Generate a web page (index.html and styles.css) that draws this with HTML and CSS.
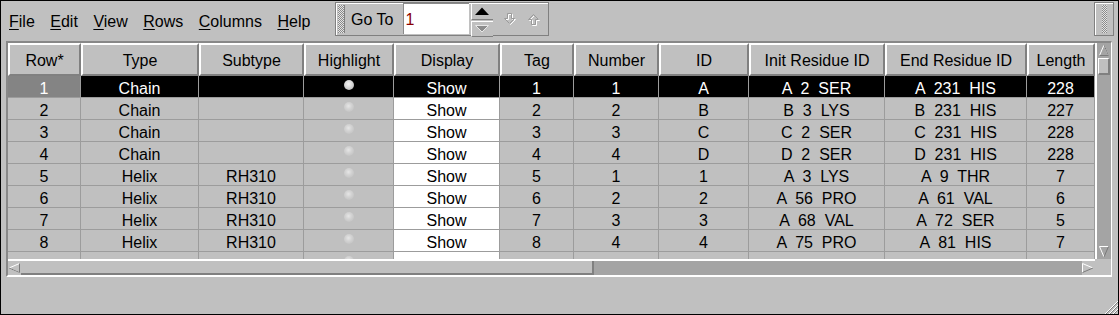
FILE: index.html
```html
<!DOCTYPE html>
<html>
	<head>
		<meta charset=utf-8>
		<title>Secondary structure table</title>
		<link rel="stylesheet" href="styles.css">
	</head>
	<body>
		<div class="window">

			<div class="topbar">
				<nav class="menubar">
					<span class="menu"><u>F</u>ile</span>
					<span class="menu"><u>E</u>dit</span>
					<span class="menu"><u>V</u>iew</span>
					<span class="menu"><u>R</u>ows</span>
					<span class="menu"><u>C</u>olumns</span>
					<span class="menu"><u>H</u>elp</span>
				</nav>
				<div class="toolbar">
					<span class="grip"></span>
					<span class="goto-label">Go To</span>
					<span class="goto-field">1</span>
					<div class="spin">
						<span class="spin-btn">
							<svg width="22" height="15" viewBox="0 0 22 15"><path d="M4 11 L18 11 L11 3.5 Z" fill="#000"/></svg>
						</span>
						<span class="spin-btn">
							<svg width="22" height="14" viewBox="0 0 22 14"><path d="M4.5 3.5 L17.5 3.5 L11 10 Z" fill="#8c8c8c" stroke="#e8e8e8" stroke-width="1"/></svg>
						</span>
					</div>
					<span class="nav-icon">
						<svg width="14" height="13" viewBox="0 0 14 13"><path d="M5.5 1.5 H9.5 V6.5 H12.5 L7.5 11.5 L2.5 6.5 H5.5 Z" fill="none" stroke="#fff"/><path d="M4.5 0.5 H8.5 V5.5 H11.5 L6.5 10.5 L1.5 5.5 H4.5 Z" fill="none" stroke="#9a9a9a"/></svg>
					</span>
					<span class="nav-icon up">
						<svg width="14" height="13" viewBox="0 0 14 13"><path d="M5.5 12.5 H9.5 V7.5 H12.5 L7.5 2.5 L2.5 7.5 H5.5 Z" fill="none" stroke="#fff"/><path d="M4.5 11.5 H8.5 V6.5 H11.5 L6.5 1.5 L1.5 6.5 H4.5 Z" fill="none" stroke="#9a9a9a"/></svg>
					</span>
				</div>
				<div class="topbar-fill"></div>
				<div class="grip-box"><span class="grip"></span></div>
			</div>

			<div class="frame">
				<div class="viewport">
					<div class="row head">
						<div class="cell">Row*</div>
						<div class="cell">Type</div>
						<div class="cell">Subtype</div>
						<div class="cell">Highlight</div>
						<div class="cell">Display</div>
						<div class="cell">Tag</div>
						<div class="cell">Number</div>
						<div class="cell">ID</div>
						<div class="cell">Init Residue ID</div>
						<div class="cell">End Residue ID</div>
						<div class="cell">Length</div>
					</div>
					<div class="row sel">
						<div class="cell num">1</div>
						<div class="cell">Chain</div>
						<div class="cell"></div>
						<div class="cell"><span class="dot"></span></div>
						<div class="cell show">Show</div>
						<div class="cell">1</div>
						<div class="cell">1</div>
						<div class="cell">A</div>
						<div class="cell">A  2  SER</div>
						<div class="cell">A  231  HIS</div>
						<div class="cell">228</div>
					</div>
					<div class="row">
						<div class="cell num">2</div>
						<div class="cell">Chain</div>
						<div class="cell"></div>
						<div class="cell"><span class="dot"></span></div>
						<div class="cell show">Show</div>
						<div class="cell">2</div>
						<div class="cell">2</div>
						<div class="cell">B</div>
						<div class="cell">B  3  LYS</div>
						<div class="cell">B  231  HIS</div>
						<div class="cell">227</div>
					</div>
					<div class="row">
						<div class="cell num">3</div>
						<div class="cell">Chain</div>
						<div class="cell"></div>
						<div class="cell"><span class="dot"></span></div>
						<div class="cell show">Show</div>
						<div class="cell">3</div>
						<div class="cell">3</div>
						<div class="cell">C</div>
						<div class="cell">C  2  SER</div>
						<div class="cell">C  231  HIS</div>
						<div class="cell">228</div>
					</div>
					<div class="row">
						<div class="cell num">4</div>
						<div class="cell">Chain</div>
						<div class="cell"></div>
						<div class="cell"><span class="dot"></span></div>
						<div class="cell show">Show</div>
						<div class="cell">4</div>
						<div class="cell">4</div>
						<div class="cell">D</div>
						<div class="cell">D  2  SER</div>
						<div class="cell">D  231  HIS</div>
						<div class="cell">228</div>
					</div>
					<div class="row">
						<div class="cell num">5</div>
						<div class="cell">Helix</div>
						<div class="cell">RH310</div>
						<div class="cell"><span class="dot"></span></div>
						<div class="cell show">Show</div>
						<div class="cell">5</div>
						<div class="cell">1</div>
						<div class="cell">1</div>
						<div class="cell">A  3  LYS</div>
						<div class="cell">A  9  THR</div>
						<div class="cell">7</div>
					</div>
					<div class="row">
						<div class="cell num">6</div>
						<div class="cell">Helix</div>
						<div class="cell">RH310</div>
						<div class="cell"><span class="dot"></span></div>
						<div class="cell show">Show</div>
						<div class="cell">6</div>
						<div class="cell">2</div>
						<div class="cell">2</div>
						<div class="cell">A  56  PRO</div>
						<div class="cell">A  61  VAL</div>
						<div class="cell">6</div>
					</div>
					<div class="row">
						<div class="cell num">7</div>
						<div class="cell">Helix</div>
						<div class="cell">RH310</div>
						<div class="cell"><span class="dot"></span></div>
						<div class="cell show">Show</div>
						<div class="cell">7</div>
						<div class="cell">3</div>
						<div class="cell">3</div>
						<div class="cell">A  68  VAL</div>
						<div class="cell">A  72  SER</div>
						<div class="cell">5</div>
					</div>
					<div class="row">
						<div class="cell num">8</div>
						<div class="cell">Helix</div>
						<div class="cell">RH310</div>
						<div class="cell"><span class="dot"></span></div>
						<div class="cell show">Show</div>
						<div class="cell">8</div>
						<div class="cell">4</div>
						<div class="cell">4</div>
						<div class="cell">A  75  PRO</div>
						<div class="cell">A  81  HIS</div>
						<div class="cell">7</div>
					</div>
					<!-- next row is cut off by the scrollbar -->
					<div class="row">
						<div class="cell num"></div>
						<div class="cell"></div>
						<div class="cell"></div>
						<div class="cell"><span class="dot"></span></div>
						<div class="cell show"></div>
						<div class="cell"></div>
						<div class="cell"></div>
						<div class="cell"></div>
						<div class="cell"></div>
						<div class="cell"></div>
						<div class="cell"></div>
					</div>
				</div>

				<div class="vscroll">
					<span class="arrow">
						<svg width="12" height="12" viewBox="0 0 12 12"><path d="M1.5 11.5 L6 1 L10.5 11.5" fill="none" stroke="#fff"/><path d="M1.5 11.5 H10.5 L6 1" fill="none" stroke="#7a7a7a"/></svg>
					</span>
					<span class="vthumb"></span>
					<span class="trough"></span>
					<span class="arrow">
						<svg width="12" height="12" viewBox="0 0 12 12"><path d="M10.5 0.5 H1.5 L6 11" fill="none" stroke="#fff"/><path d="M10.5 0.5 L6 11" fill="none" stroke="#7a7a7a"/></svg>
					</span>
				</div>

				<div class="hscroll">
					<span class="arrow">
						<svg width="12" height="12" viewBox="0 0 12 12"><path d="M11.5 1.5 L1 6 L11.5 10.5" fill="none" stroke="#fff"/><path d="M11.5 1.5 V10.5 L1 6" fill="none" stroke="#7a7a7a"/></svg>
					</span>
					<span class="hthumb"></span>
					<span class="trough"></span>
					<span class="arrow">
						<svg width="12" height="12" viewBox="0 0 12 12"><path d="M0.5 10.5 V1.5 L11 6" fill="none" stroke="#fff"/><path d="M0.5 10.5 L11 6" fill="none" stroke="#7a7a7a"/></svg>
					</span>
				</div>
				<div class="corner"></div>
			</div>

			<div class="bottom">
				<svg class="resize" width="14" height="14" viewBox="0 0 14 14">
					<path d="M14 1 L1 14 M14 5 L5 14 M14 9 L9 14" stroke="#fff" stroke-width="1"/>
					<path d="M14 2 L2 14 M14 6 L6 14 M14 10 L10 14" stroke="#808080" stroke-width="1"/>
				</svg>
			</div>
		</div>
	</body>
</html>
```

FILE: styles.css
```css
body { margin: 0; overflow: hidden; background-color: #c0c0c0; font: 16px "Liberation Sans", Arial, sans-serif; color: #000; }

.window {
	width: 1119px;
	height: 315px;
	box-sizing: border-box;
	border: 1px solid #000;
	background-color: #c0c0c0;
	display: flex;
	flex-direction: column;
}

/* menu + tool bar */
.topbar {
	height: 39px;
	display: flex;
	align-items: flex-start;
}
.menubar {
	width: 334px;
	box-sizing: border-box;
	padding: 12px 0 0 8px;
	display: flex;
	gap: 15.5px;
	line-height: 18px;
}
.menu u {
	text-underline-offset: 2px;
}
.toolbar {
	margin-top: 1px;
	width: 214px;
	height: 34px;
	box-sizing: border-box;
	border: 1px solid #808080;
	box-shadow: inset 1px 1px 0 #fff;
	display: flex;
	align-items: flex-start;
}
.grip {
	width: 6px;
	height: 28px;
	margin: 2px 0 0 2px;
	border-right: 1px solid #808080;
	background: repeating-conic-gradient(#8a8a8a 0 25%, #e4e4e4 0 50%) 0 0 / 2px 2px;
}
.goto-label {
	margin: 8px 0 0 6px;
	line-height: 18px;
}
.goto-field {
	margin-left: 10px;
	width: 66px;
	height: 31px;
	box-sizing: border-box;
	padding: 7px 0 0 1px;
	line-height: 18px;
	background-color: #fff;
	border-top: 1px solid #8a8a8a;
	border-left: 1px solid #8a8a8a;
	color: #8a0000;
}
.spin {
	margin-left: 2px;
	width: 22px;
	display: flex;
	flex-direction: column;
	gap: 1px;
}
.spin-btn {
	display: block;
	line-height: 0;
	background-color: #c0c0c0;
	border-top: 1px solid #fff;
	border-left: 1px solid #fff;
	border-bottom: 1px solid #808080;
}
.spin-btn svg { margin-left: -1px; }
.nav-icon {
	margin: 10px 0 0 10px;
	line-height: 0;
}
.nav-icon.up { margin-left: 10px; }
.topbar-fill { flex: 1; }
.grip-box {
	margin: 1px 4px 0 0;
	width: 20px;
	height: 34px;
	box-sizing: border-box;
	border: 1px solid #808080;
	box-shadow: inset 1px 1px 0 #fff;
	display: flex;
	justify-content: center;
}
.grip-box .grip {
	margin: 2px 0 0 0;
	border-right: none;
	width: 5px;
}

/* table frame */
.frame {
	margin: 1px 0 0 5px;
	width: 1103px;
	border-top: 2px solid #888;
	border-left: 2px solid #888;
	border-bottom: 2px solid #fff;
	border-right: 1px solid #fff;
	display: grid;
	grid-template-columns: 1087px 16px;
	grid-template-rows: 216px 16px;
}
.viewport {
	overflow: hidden;
	background-color: #c0c0c0;
}
.row {
	display: grid;
	grid-template-columns: 73px 118px 105px 90px 106px 74px 85px 90px 136px 142px 68px;
	height: 22px;
}
.cell {
	box-sizing: border-box;
	border-right: 1px solid #9c9c9c;
	border-bottom: 1px solid #9c9c9c;
	padding-top: 4px;
	line-height: 18px;
	text-align: center;
	white-space: pre;
	overflow: hidden;
}
.row.head { height: 33px; }
.row.head .cell {
	border-top: 2px solid #fff;
	border-left: 2px solid #fff;
	border-right: 2px solid #808080;
	border-bottom: 2px solid #808080;
	padding-top: 7px;
}
.cell.show { background-color: #fff; }
.row.sel .cell { background-color: #000; color: #fff; }
.row.sel .cell.num { background-color: #848484; }

/* the "highlight" ball */
.dot {
	display: inline-block;
	width: 10px;
	height: 10px;
	margin-top: 0;
	border-radius: 50%;
	vertical-align: top;
	background: radial-gradient(circle at 45% 40%, #e6e6e6 0, #d4d4d4 35%, #c4c4c4 75%, #b8b8b8 100%);
}
.row.sel .dot {
	background: radial-gradient(circle at 45% 40%, #f4f4f4 0, #dcdcdc 40%, #b4b4b4 85%, #8a8a8a 100%);
}

/* scrollbars */
.vscroll {
	border-left: 2px solid #fff;
	background-color: #a4a4a4;
	display: flex;
	flex-direction: column;
	align-items: center;
}
.vscroll .arrow {
	line-height: 0;
	padding: 1px 0;
}
.vthumb {
	margin-top: 1px;
	width: 12px;
	height: 17px;
	box-sizing: border-box;
	background-color: #c0c0c0;
	border-top: 1px solid #fff;
	border-left: 1px solid #fff;
	border-bottom: 2px solid #808080;
	border-right: 2px solid #808080;
}
.trough { flex: 1; }
.hscroll {
	border-top: 2px solid #fff;
	background-color: #a4a4a4;
	display: flex;
	align-items: stretch;
}
.hscroll .arrow {
	width: 13px;
	line-height: 0;
	display: flex;
	align-items: center;
	background-color: #c0c0c0;
}
.hthumb {
	width: 573px;
	box-sizing: border-box;
	background-color: #c0c0c0;
	border-right: 2px solid #808080;
	border-bottom: 2px solid #808080;
}
.corner { background-color: #c0c0c0; }

.bottom {
	flex: 1;
	display: flex;
	justify-content: flex-end;
	align-items: flex-end;
}
.resize { display: block; }
```
